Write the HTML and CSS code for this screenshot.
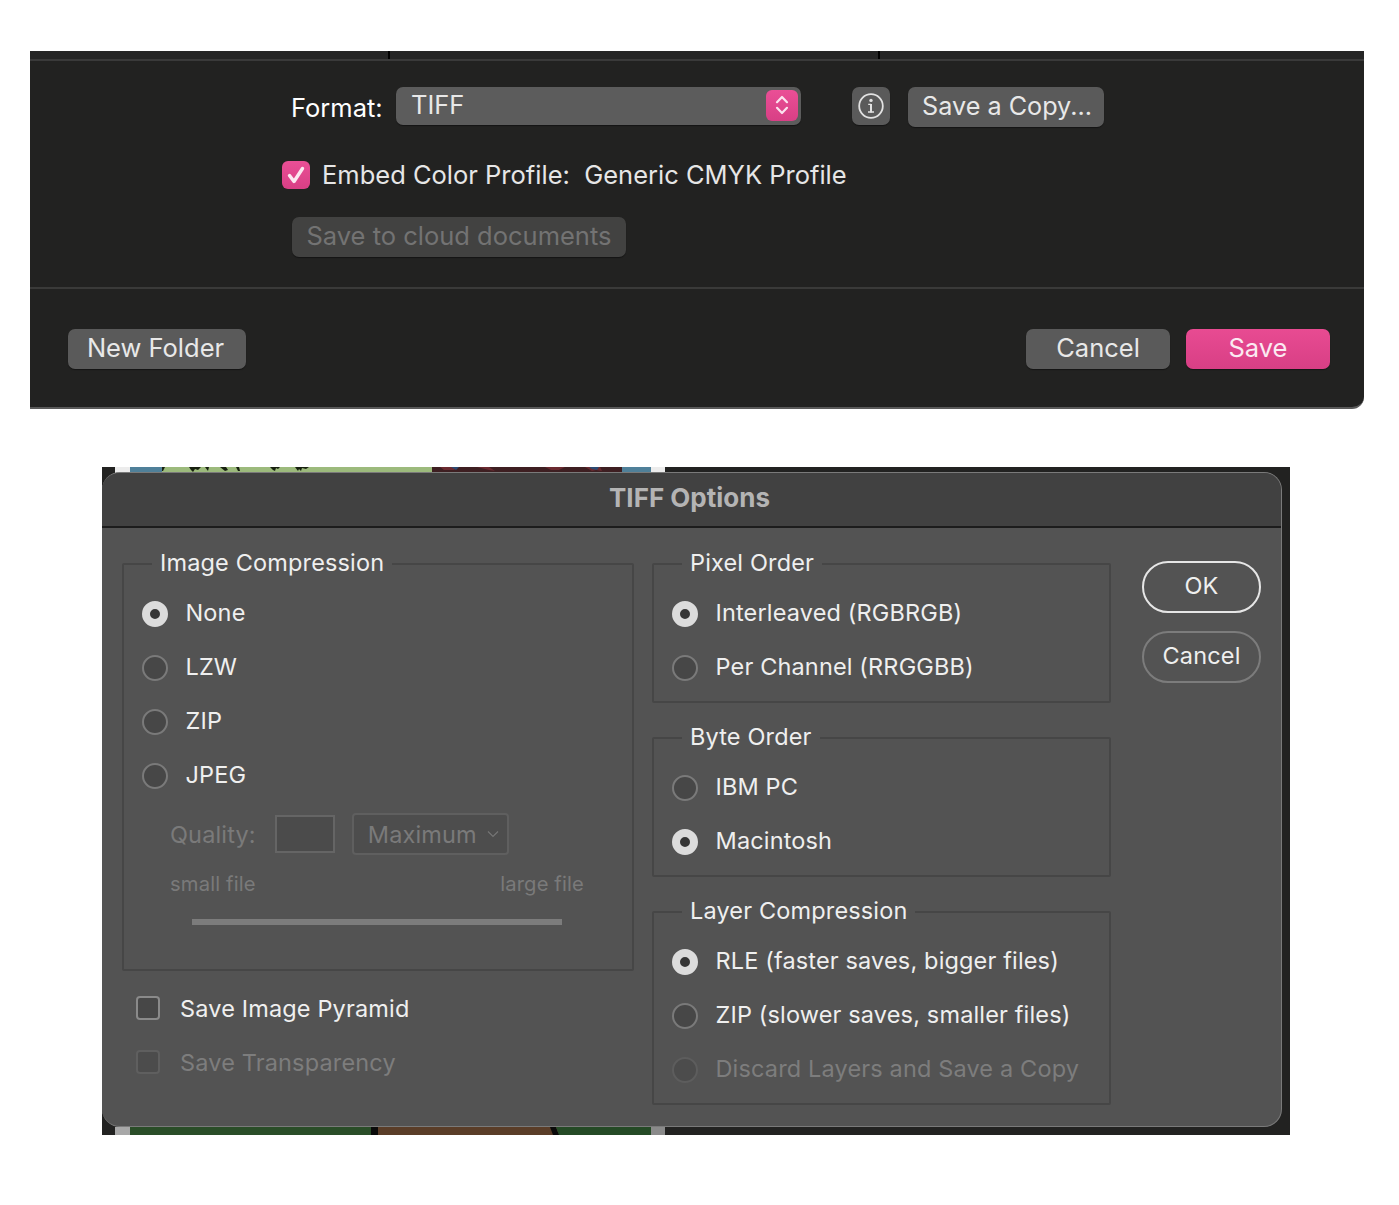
FILE: index.html
```html
<!DOCTYPE html>
<html lang="en">
<head>
<meta charset="utf-8">
<title>TIFF Options</title>
<link rel="stylesheet" href="styles.css">
</head>
<body>
<section class="save">
  <div class="tabs"><i class="tick t1"></i><i class="tick t2"></i></div>
  <div class="opts">
    <div class="row-format">
      <span class="fmt-label">Format:</span>
      <div class="popup"><span>TIFF</span>
        <span class="stepper"><svg width="16" height="24" viewBox="0 0 16 24"><path d="M3 9.2 8 4 13 9.2M3 14.8 8 20 13 14.8" fill="none" stroke="#fbe3ee" stroke-width="2.2" stroke-linecap="round" stroke-linejoin="round"/></svg></span>
      </div>
      <span class="btn info"><svg width="28" height="28" viewBox="0 0 28 28"><circle cx="14" cy="14" r="11.8" fill="none" stroke="#e2e2e2" stroke-width="1.8"/><circle cx="14" cy="8.4" r="1.7" fill="#e2e2e2"/><path d="M14 12V20.4" fill="none" stroke="#e2e2e2" stroke-width="2"/><path d="M11.2 12.4H14M11 20H17" fill="none" stroke="#e2e2e2" stroke-width="1.4"/></svg></span>
      <span class="btn copy">Save a Copy...</span>
    </div>
    <div class="row-embed">
      <span class="pink-check"><svg width="22" height="22" viewBox="0 0 22 22"><path d="M4.5 11.5 9 17.5 17.5 4.5" fill="none" stroke="#fce8f1" stroke-width="3.4" stroke-linecap="round" stroke-linejoin="round"/></svg></span>
      <span class="embed-text">Embed Color Profile:&nbsp; Generic CMYK Profile</span>
    </div>
    <span class="btn cloud">Save to cloud documents</span>
  </div>
  <div class="actions">
    <span class="btn act folder">New Folder</span>
    <span class="spacer"></span>
    <span class="btn act cancel">Cancel</span>
    <span class="btn act primary">Save</span>
  </div>
</section>

<section class="backdrop">
  <svg class="art art-top" width="550" height="8" viewBox="0 0 550 8">
    <rect width="15" height="8" fill="#ececec"/>
    <rect x="15" width="32" height="8" fill="#4f8099"/>
    <rect x="47" width="270" height="8" fill="#9cba7c"/>
    <path d="M47 0h3l-2 4h-1zM74 0h12l-3 3-3-1-2 3-2-2zM90 0h4l-1 4zM105 0h6l2 3-3 1zM121 0h3l1 4h-2zM155 0h10l-2 2-2-1-1 3-2-1zM180 0h14l-3 2-4-1-1 3-2-2-1 2z" fill="#17200f"/>
    <rect x="317" width="190" height="8" fill="#3e1f22"/>
    <path d="M325 0h18l-4 3h-10zM362 0h12l6 4-6-1zM430 0h20l-6 3h-8zM470 0h15l2 4-6-1-4 1z" fill="#6b2a30"/>
    <path d="M336 0h8l-3 3zM474 0h10l-2 3-5-1z" fill="#2c4a72"/>
    <rect x="507" width="29" height="8" fill="#4f8099"/>
    <rect x="536" width="14" height="8" fill="#ececec"/>
  </svg>
  <svg class="art art-bottom" width="550" height="8" viewBox="0 0 550 8">
    <rect width="15" height="8" fill="#a8a8a8"/>
    <rect x="15" width="241" height="8" fill="#2a4d28"/>
    <rect x="256" width="7" height="8" fill="#0a0a0a"/>
    <rect x="263" width="180" height="8" fill="#5a3d28"/>
    <path d="M435 0h6l3 8h-6z" fill="#0a0a0a"/>
    <path d="M441 0h95v8h-92z" fill="#254a26"/>
    <rect x="536" width="14" height="8" fill="#8a8a8a"/>
  </svg>
  <div class="dialog">
    <header class="title">TIFF Options</header>
    <div class="body">
      <div class="col-left">
        <fieldset class="group g-image">
          <legend>Image Compression</legend>
          <div class="opt"><i class="radio on"></i>None</div>
          <div class="opt"><i class="radio"></i>LZW</div>
          <div class="opt"><i class="radio"></i>ZIP</div>
          <div class="opt"><i class="radio"></i>JPEG</div>
          <div class="quality">
            <span>Quality:</span><i class="q-input"></i>
            <span class="q-select">Maximum<svg width="12" height="8" viewBox="0 0 12 8"><path d="M1 1.5 6 6.5 11 1.5" fill="none" stroke="#757575" stroke-width="1.2"/></svg></span>
          </div>
          <div class="scale"><span>small file</span><span>large file</span></div>
          <div class="slider"></div>
        </fieldset>
        <div class="check-row"><i class="box"></i>Save Image Pyramid</div>
        <div class="check-row off"><i class="box"></i>Save Transparency</div>
      </div>
      <div class="col-right">
        <fieldset class="group g-pixel">
          <legend>Pixel Order</legend>
          <div class="opt"><i class="radio on"></i>Interleaved (RGBRGB)</div>
          <div class="opt"><i class="radio"></i>Per Channel (RRGGBB)</div>
        </fieldset>
        <fieldset class="group g-byte">
          <legend>Byte Order</legend>
          <div class="opt"><i class="radio"></i>IBM PC</div>
          <div class="opt"><i class="radio on"></i>Macintosh</div>
        </fieldset>
        <fieldset class="group g-layer">
          <legend>Layer Compression</legend>
          <div class="opt"><i class="radio on"></i>RLE (faster saves, bigger files)</div>
          <div class="opt"><i class="radio"></i>ZIP (slower saves, smaller files)</div>
          <div class="opt off"><i class="radio"></i>Discard Layers and Save a Copy</div>
        </fieldset>
      </div>
      <div class="col-btns">
        <span class="pill ok">OK</span>
        <span class="pill">Cancel</span>
      </div>
    </div>
  </div>
</section>
</body>
</html>
```
FILE: styles.css
```css
* { box-sizing: border-box; }
html, body { margin: 0; background: #fff; }
body { width: 1399px; height: 1205px; padding: 51px 0 0 30px; overflow: hidden; font-family: Inter, "Liberation Sans", sans-serif; }
i { display: block; font-style: normal; }

.save { width: 1334px; height: 358px; background: #222221; border-bottom: 2px solid #5a5a5a; border-bottom-right-radius: 12px; color: #e6e6e6; font-size: 25.5px; display: flex; flex-direction: column; }
.tabs { height: 10px; background: #252525; border-bottom: 2px solid #3a3a3a; display: flex; flex: none; }
.tick { width: 2px; height: 8px; background: #000; }
.t1 { margin-left: 358px; }
.t2 { margin-left: 488px; }
.opts { height: 228px; border-bottom: 2px solid #3a3a39; padding: 26px 0 0 252px; flex: none; }
.btn { display: flex; align-items: center; justify-content: center; background: #5a5a5a; border-radius: 7px; color: #e8e8e8; box-shadow: 0 1px 1px rgba(0,0,0,.4); padding-bottom: 3px; }
.row-format { display: flex; align-items: flex-start; height: 40px; }
.fmt-label { width: 114px; padding: 5px 0 0 9px; color: #fff; flex: none; white-space: nowrap; }
.popup { width: 405px; height: 38px; background: #5c5c5c; border-radius: 7px; display: flex; align-items: center; justify-content: space-between; padding: 0 3px 2px 15px; color: #e8e8e8; box-shadow: 0 1px 1px rgba(0,0,0,.4); }
.popup > span:first-child { margin-top: -2px; }
.stepper { width: 32px; height: 31px; background: linear-gradient(#ea4f96, #d83f85); border-radius: 6px; display: flex; align-items: center; justify-content: center; }
.info { width: 38px; height: 38px; margin-left: 51px; padding-bottom: 0; }
.copy { width: 196px; height: 40px; margin-left: 18px; font-size: 25.2px; padding-left: 2px; }
.row-embed { display: flex; align-items: center; height: 34px; margin: 31px 0 0 0; gap: 12px; white-space: nowrap; }
.embed-text { margin-top: -2px; }
.pink-check { width: 28px; height: 28px; border-radius: 6px; background: linear-gradient(#ea4f96, #d83f85); display: flex; align-items: center; justify-content: center; }
.cloud { width: 334px; height: 40px; margin: 25px 0 0 10px; background: #424241; color: #737373; }
.actions { display: flex; padding: 40px 34px 0 38px; gap: 16px; }
.act { height: 40px; }
.folder { width: 178px; padding-right: 3px; }
.spacer { flex: 1; }
.cancel { width: 144px; }
.primary { width: 144px; background: linear-gradient(#e84b92, #d83f85); color: #fbeaf2; }

.backdrop { position: relative; width: 1188px; height: 668px; margin: 58px 0 0 72px; background: #222221; overflow: hidden; }
.art { position: absolute; left: 13px; display: block; }
.art-top { top: 0; }
.art-bottom { bottom: 0; }

.dialog { position: absolute; left: 0; top: 5px; width: 1180px; height: 655px; background: #535353; border: 1px solid #7a7a7a; border-left: 0; border-radius: 18px; overflow: hidden; color: #efefef; font-size: 23.5px; letter-spacing: .15px; }
.title { height: 55px; background: #414141; border-bottom: 2px solid #1c1c1c; color: #b4b4b4; font-weight: 700; font-size: 26px; letter-spacing: 0; display: flex; align-items: center; justify-content: center; padding: 0 4px 4px 0; }
.body { display: flex; padding: 22px 0 0 20px; align-items: flex-start; }
.col-left { width: 512px; flex: none; }
.col-right { width: 459px; margin-left: 18px; flex: none; }
.col-btns { width: 119px; margin-left: 31px; display: flex; flex-direction: column; gap: 18px; margin-top: 11px; }

.group { margin: 0; padding: 7px 0 0 18px; border: 2px solid #464646; border-radius: 2px; min-width: 0; }
.group legend { padding: 0 8px; margin-left: 10px; line-height: 25px; height: 28px; white-space: nowrap; }
.g-image { height: 421px; }
.g-pixel { height: 153px; }
.g-byte { height: 153px; margin-top: 21px; }
.g-layer { height: 207px; margin-top: 21px; }
.opt { display: flex; align-items: center; height: 54px; white-space: nowrap; }
.radio { width: 26px; height: 26px; border-radius: 50%; background: #474747; border: 2px solid #7a7a7a; margin: 3px 17.5px 0 0; flex: none; }
.radio.on { background: #363636; border: 8px solid #dcdcdc; }
.off { color: #7d7d7d; }
.off .radio { border-color: #5d5d5d; background: #4c4c4c; }
.quality { display: flex; align-items: center; height: 42px; margin: 12px 0 0 28px; color: #7a7a7a; white-space: nowrap; }
.q-input { width: 60px; height: 38px; margin-left: 19px; border: 2px solid #656565; background: #4b4b4b; }
.q-select { width: 157px; height: 42px; margin-left: 17px; border: 2px solid #5f5f5f; border-radius: 4px; background: #4d4d4d; display: flex; align-items: center; justify-content: space-between; padding: 0 8px 0 14px; }
.scale { display: flex; justify-content: space-between; width: 414px; margin: 14px 0 0 28px; font-size: 20.2px; color: #7a7a7a; line-height: 30px; }
.slider { width: 370px; height: 6px; margin: 20px 0 0 50px; background: #7c7c7c; }
.check-row { display: flex; align-items: center; height: 54px; margin-left: 14px; white-space: nowrap; }
.g-image + .check-row { margin-top: 10px; }
.box { width: 24px; height: 24px; border: 2px solid #8a8a8a; border-radius: 4px; background: #474747; margin-right: 20px; flex: none; }
.check-row.off .box { border-color: #5f5f5f; background: #4c4c4c; }
.pill { height: 52px; border: 2px solid #7c7c7c; border-radius: 26px; display: flex; align-items: center; justify-content: center; padding-bottom: 3px; }
.pill.ok { border-color: #e6e6e6; }
```
